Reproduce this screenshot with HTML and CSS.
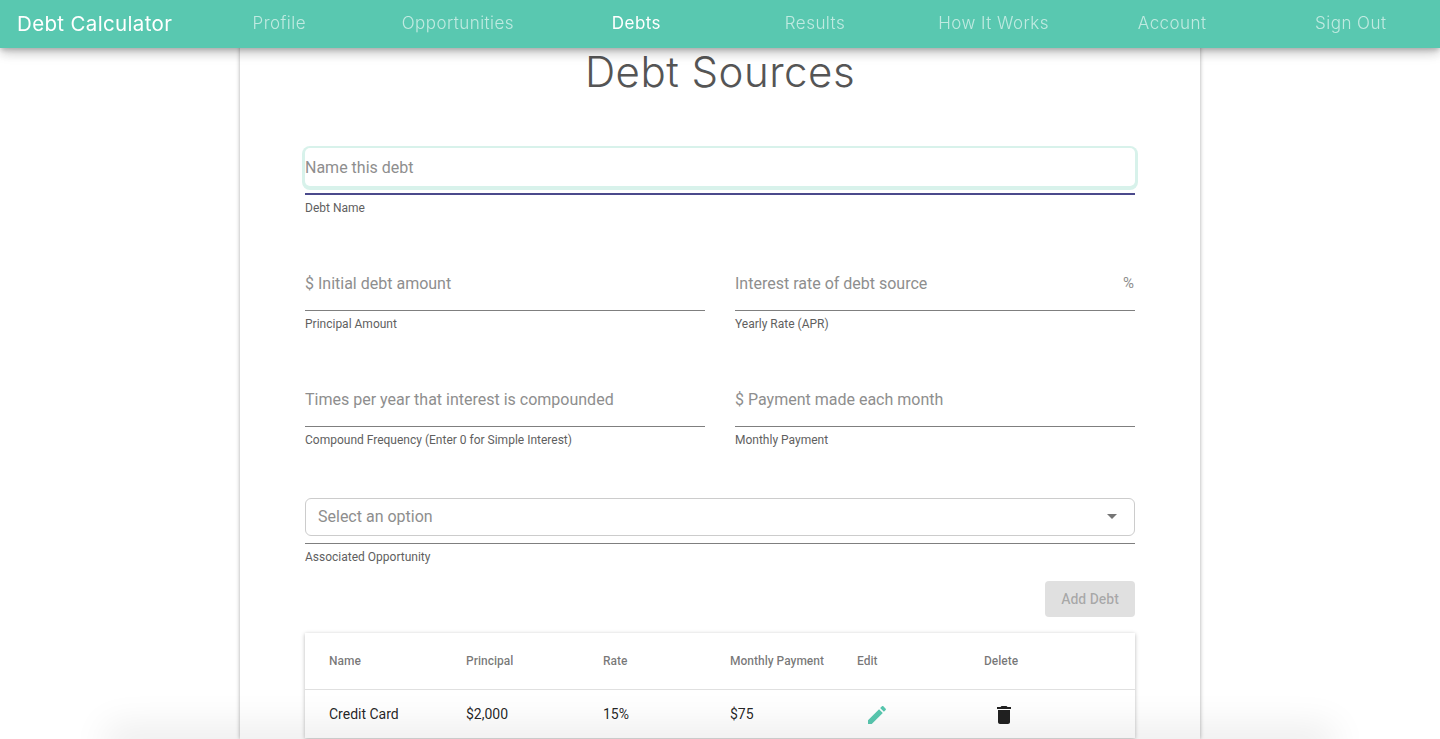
FILE: index.html
```html
<!DOCTYPE html>
<html lang="en">
<head>
<meta charset="utf-8">
<title>Debt Calculator</title>
<link rel="stylesheet" href="styles.css">
</head>
<body>
<header class="topbar">
  <a class="brand">Debt Calculator</a>
  <nav class="nav">
    <a class="nav-link">Profile</a>
    <a class="nav-link">Opportunities</a>
    <a class="nav-link active">Debts</a>
    <a class="nav-link">Results</a>
    <a class="nav-link">How It Works</a>
    <a class="nav-link">Account</a>
    <a class="nav-link">Sign Out</a>
  </nav>
</header>
<main class="card">
  <h1 class="title">Debt Sources</h1>
  <form class="form">
    <div class="field wide">
      <div class="control focused"><span class="placeholder">Name this debt</span></div>
      <div class="rule strong"></div>
      <div class="hint">Debt Name</div>
    </div>
    <div class="field">
      <div class="control"><span class="placeholder">$ Initial debt amount</span></div>
      <div class="rule"></div>
      <div class="hint">Principal Amount</div>
    </div>
    <div class="field">
      <div class="control"><span class="placeholder">Interest rate of debt source</span><span class="suffix">%</span></div>
      <div class="rule"></div>
      <div class="hint">Yearly Rate (APR)</div>
    </div>
    <div class="field">
      <div class="control"><span class="placeholder">Times per year that interest is compounded</span></div>
      <div class="rule"></div>
      <div class="hint">Compound Frequency (Enter 0 for Simple Interest)</div>
    </div>
    <div class="field">
      <div class="control"><span class="placeholder">$ Payment made each month</span></div>
      <div class="rule"></div>
      <div class="hint">Monthly Payment</div>
    </div>
    <div class="field wide select-field">
      <div class="control select"><span class="placeholder">Select an option</span><span class="arrow"></span></div>
      <div class="rule select-rule"></div>
      <div class="hint">Associated Opportunity</div>
    </div>
  </form>
  <div class="actions"><button class="add" type="button" disabled>Add Debt</button></div>
  <section class="table">
    <div class="row head">
      <div>Name</div><div>Principal</div><div>Rate</div><div>Monthly Payment</div><div>Edit</div><div>Delete</div>
    </div>
    <div class="row body">
      <div>Credit Card</div><div>$2,000</div><div>15%</div><div>$75</div>
      <div><span class="icon-btn"><svg class="icon teal" viewBox="0 0 24 24"><path d="M3 17.25V21h3.75L17.81 9.94l-3.75-3.75L3 17.25zM20.71 7.04c.39-.39.39-1.02 0-1.41l-2.34-2.34c-.39-.39-1.02-.39-1.41 0l-1.83 1.83 3.75 3.75 1.83-1.83z"/></svg></span></div>
      <div><span class="icon-btn"><svg class="icon dark" viewBox="0 0 24 24"><path d="M6 19c0 1.1.9 2 2 2h8c1.1 0 2-.9 2-2V7H6v12zM19 4h-3.5l-1-1h-5l-1 1H5v2h14V4z"/></svg></span></div>
    </div>
  </section>
</main>
<div class="bottom-glow"></div>
</body>
</html>
```
FILE: styles.css
```css
* { box-sizing: border-box; }
html, body { height: 100%; }
body {
  margin: 0;
  overflow: hidden;
  background: #fff;
  font-family: Roboto, "Liberation Sans", sans-serif;
  color: rgba(0, 0, 0, .87);
}
.topbar {
  position: fixed;
  top: 0; left: 0; right: 0;
  z-index: 5;
  height: 48px;
  padding-bottom: 2px;
  display: flex;
  align-items: center;
  background: #59c8b0;
  box-shadow: 0 3px 5px -1px rgba(0,0,0,.2), 0 6px 10px 0 rgba(0,0,0,.14), 0 1px 18px 0 rgba(0,0,0,.12);
  font-family: Inter, sans-serif;
}
.brand {
  flex: 0 0 190px;
  padding-left: 17px;
  color: #fff;
  font-size: 20.5px;
  font-weight: 400;
  letter-spacing: .35px;
}
.nav { flex: 1; display: flex; }
.nav-link {
  flex: 1;
  text-align: center;
  font-size: 17px;
  font-weight: 300;
  letter-spacing: .45px;
  color: rgba(255, 255, 255, .62);
}
.nav-link.active { color: #fff; font-weight: 400; }
.card {
  width: 960px;
  height: 739px;
  margin: 0 auto;
  padding: 48px 65px 0;
  background: #fff;
  box-shadow: 0 0 4px rgba(0, 0, 0, .35);
  overflow: hidden;
}
.title {
  margin: 0;
  height: 100px;
  line-height: 47px;
  text-align: center;
  font-family: Inter, sans-serif;
  font-size: 42px;
  font-weight: 300;
  letter-spacing: .5px;
  color: #555;
}
.form {
  display: grid;
  grid-template-columns: 400px 400px;
  column-gap: 30px;
  row-gap: 0;
}
.field { height: 116px; }
.wide { grid-column: 1 / -1; }
.select-field { height: 83px; margin-top: 2px; }
.control {
  height: 38px;
  display: flex;
  align-items: center;
  justify-content: space-between;
  font-size: 16px;
  color: #8e8e8e;
}
.control.focused {
  border-radius: 5px;
  box-shadow: 0 1px 0 3px #d8f2eb;
}
.control.select {
  padding: 0 17px 2px 12px;
  border: 1px solid #ccc;
  border-radius: 6px;
}
.suffix { padding: 0 1px 0 0; font-size: 15px; }
.arrow {
  width: 0; height: 0;
  border-left: 5px solid transparent;
  border-right: 5px solid transparent;
  border-top: 5px solid #757575;
}
.rule { height: 1px; margin-top: 8px; background: #7f7f7f; }
.rule.strong { height: 2px; margin-top: 7px; background: #4b4a8c; }
.rule.select-rule { margin-top: 7px; }
.hint {
  margin-top: 6px;
  font-size: 12px;
  line-height: 14px;
  color: #5f5f5f;
}
.actions { display: flex; justify-content: flex-end; height: 52px; }
.add {
  width: 90px;
  height: 36px;
  padding: 0;
  border: 0;
  border-radius: 4px;
  background: #e0e0e0;
  color: rgba(0, 0, 0, .26);
  font: 500 14px Roboto, sans-serif;
}
.table {
  background: #fff;
  box-shadow: 0 1px 4px rgba(0, 0, 0, .28);
}
.row {
  display: grid;
  grid-template-columns: 137px 137px 127px 127px 127px 1fr;
  padding-left: 24px;
  align-items: center;
}
.head {
  height: 57px;
  border-bottom: 1px solid #e0e0e0;
  font-size: 12px;
  font-weight: 500;
  color: rgba(0, 0, 0, .54);
}
.body {
  height: 48px;
  font-size: 14px;
  color: rgba(0, 0, 0, .87);
}
.icon-btn { display: flex; width: 40px; justify-content: center; padding-top: 1px; }
.icon { width: 24px; height: 24px; display: block; }
.teal { fill: #59c8b0; }
.dark { fill: #212121; }
.bottom-glow {
  position: fixed;
  left: 120px;
  right: 120px;
  bottom: -10px;
  height: 10px;
  z-index: 4;
  box-shadow: 0 0 36px 14px rgba(0, 0, 0, .075);
}
```
